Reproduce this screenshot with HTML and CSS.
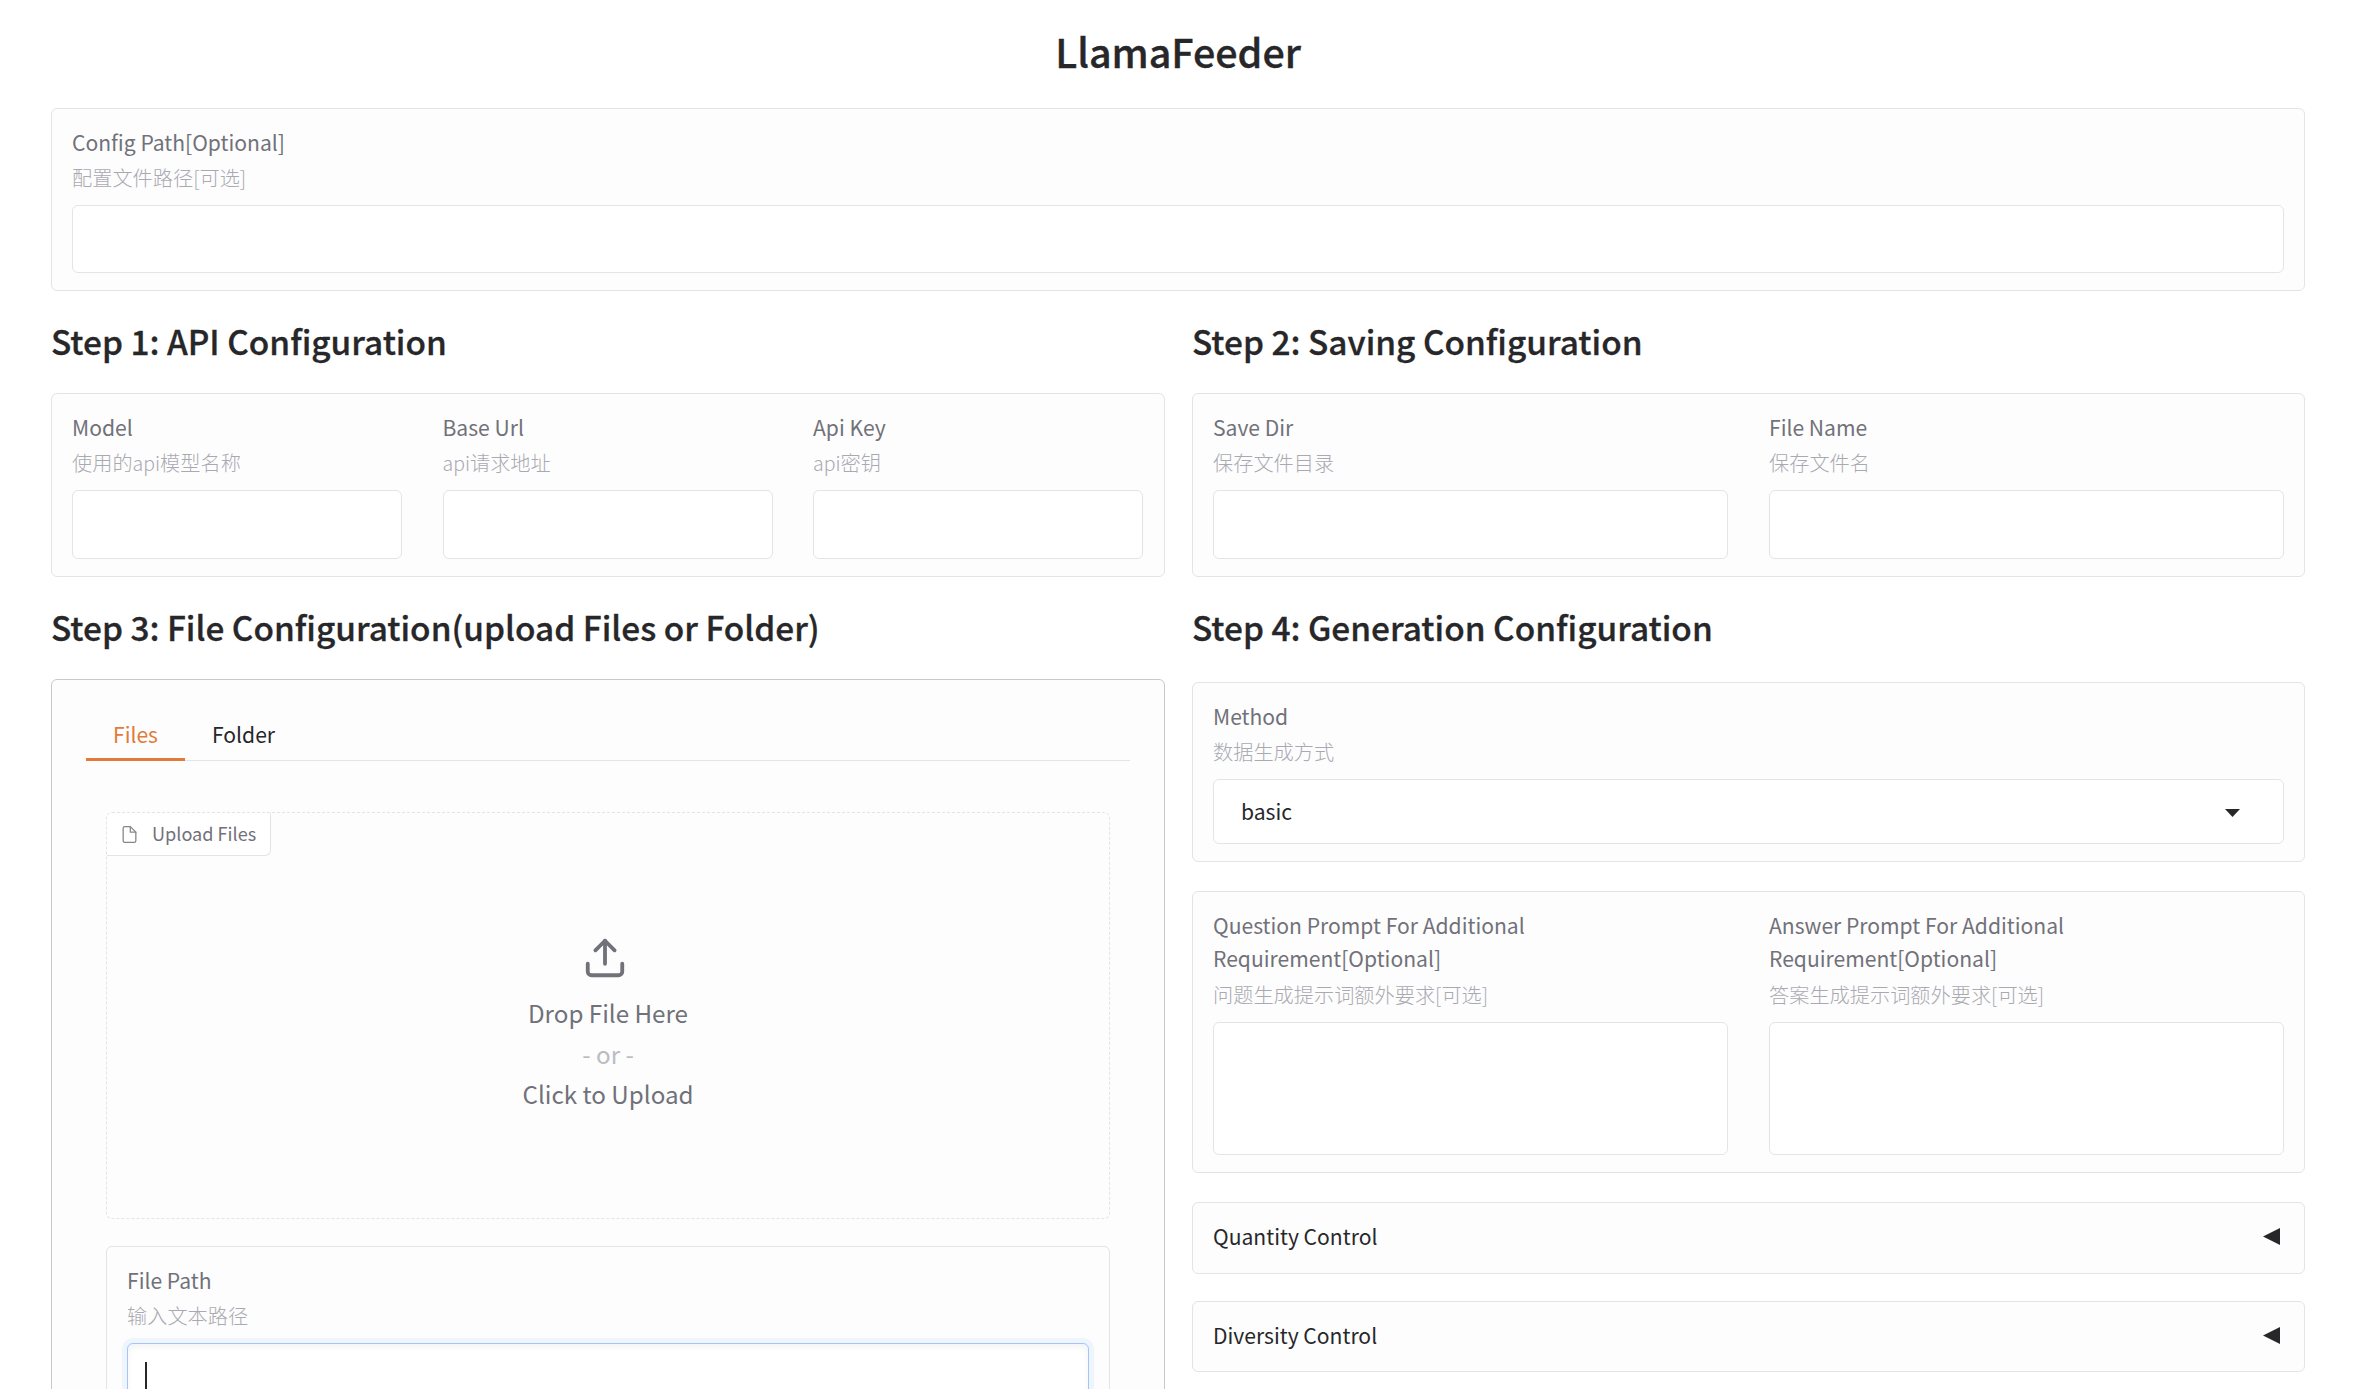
FILE: index.html
```html
<!DOCTYPE html>
<html lang="en">
<head>
<meta charset="utf-8">
<title>LlamaFeeder</title>
<link rel="stylesheet" href="styles.css">
</head>
<body>
<main class="app">
  <h1 class="title"><span>LlamaFeeder</span></h1>

  <section class="card">
    <div class="field">
      <span class="label">Config Path[Optional]</span>
      <span class="info">配置文件路径[可选]</span>
      <div class="input"></div>
    </div>
  </section>

  <div class="columns">
    <section class="column">
      <h2 class="heading"><span>Step 1: API Configuration</span></h2>
      <div class="card card-row card-tall card-thirds">
        <div class="field">
          <span class="label">Model</span>
          <span class="info">使用的<span class="latin">api</span>模型名称</span>
          <div class="input"></div>
        </div>
        <div class="field">
          <span class="label">Base Url</span>
          <span class="info"><span class="latin">api</span>请求地址</span>
          <div class="input"></div>
        </div>
        <div class="field">
          <span class="label">Api Key</span>
          <span class="info"><span class="latin">api</span>密钥</span>
          <div class="input"></div>
        </div>
      </div>
    </section>
    <section class="column">
      <h2 class="heading"><span>Step 2: Saving Configuration</span></h2>
      <div class="card card-row card-tall">
        <div class="field">
          <span class="label">Save Dir</span>
          <span class="info">保存文件目录</span>
          <div class="input"></div>
        </div>
        <div class="field">
          <span class="label">File Name</span>
          <span class="info">保存文件名</span>
          <div class="input"></div>
        </div>
      </div>
    </section>
  </div>

  <div class="columns">
    <section class="column">
      <h2 class="heading"><span>Step 3: File Configuration(upload Files or Folder)</span></h2>
      <div class="panel">
        <nav class="tabs">
          <span class="tab tab-active">Files</span>
          <span class="tab">Folder</span>
        </nav>
        <div class="panel-body">
          <div class="dropzone">
            <div class="drop-tag">
              <svg class="file-icon" viewBox="0 0 24 24" fill="none" stroke="currentColor" stroke-width="1.6" stroke-linecap="round" stroke-linejoin="round"><path d="M13 2H6a2 2 0 0 0-2 2v16a2 2 0 0 0 2 2h12a2 2 0 0 0 2-2V9z"/><path d="M13 2v7h7"/></svg>
              <span>Upload Files</span>
            </div>
            <svg class="upload-icon" viewBox="0 0 24 24" fill="none" stroke="currentColor" stroke-width="2" stroke-linecap="round" stroke-linejoin="round"><path d="M21 15v4a2 2 0 0 1-2 2H5a2 2 0 0 1-2-2v-4"/><path d="M17 8l-5-5-5 5"/><path d="M12 3v12"/></svg>
            <span class="drop-line">Drop File Here</span>
            <span class="drop-line drop-or">- or -</span>
            <span class="drop-line">Click to Upload</span>
          </div>
          <div class="card card-path">
            <div class="field">
              <span class="label">File Path</span>
              <span class="info">输入文本路径</span>
              <div class="input input-focus"><i class="caret"></i></div>
            </div>
          </div>
        </div>
      </div>
    </section>

    <section class="column">
      <h2 class="heading"><span>Step 4: Generation Configuration</span></h2>
      <div class="card card-method">
        <div class="field">
          <span class="label">Method</span>
          <span class="info">数据生成方式</span>
          <div class="input select">
            <span>basic</span>
            <svg class="select-arrow" viewBox="0 0 15 8"><path d="M0 0h15L7.500 8z"/></svg>
          </div>
        </div>
      </div>
      <div class="card card-row card-prompts">
        <div class="field">
          <span class="label">Question Prompt For Additional<br>Requirement[Optional]</span>
          <span class="info">问题生成提示词额外要求[可选]</span>
          <div class="input input-area"></div>
        </div>
        <div class="field">
          <span class="label">Answer Prompt For Additional<br>Requirement[Optional]</span>
          <span class="info">答案生成提示词额外要求[可选]</span>
          <div class="input input-area"></div>
        </div>
      </div>
      <div class="card accordion">
        <span class="accordion-label">Quantity Control</span>
        <svg class="fold-arrow" viewBox="0 0 17 17"><path d="M0 8.500L17 0v17z"/></svg>
      </div>
      <div class="card accordion accordion-next">
        <span class="accordion-label">Diversity Control</span>
        <svg class="fold-arrow" viewBox="0 0 17 17"><path d="M0 8.500L17 0v17z"/></svg>
      </div>
    </section>
  </div>
</main>
</body>
</html>
```
FILE: styles.css
```css
* { box-sizing: border-box; }

body {
  margin: 0;
  height: 1389px;
  overflow: hidden;
  background: #fff;
  color: #27272a;
  font-family: "Noto Sans CJK SC", "Open Sans", sans-serif;
  font-size: 21.1px;
}

.app { padding: 0 63px 0 51px; }

.title {
  margin: 0;
  height: 108px;
  line-height: 101px;
  font-size: 39.4px;
  font-weight: 500;
  text-align: center;
  -webkit-text-stroke: 0.4px currentColor;
}

.heading {
  margin: 0;
  height: 102px;
  line-height: 100px;
  font-size: 33.4px;
  font-weight: 500;
  white-space: nowrap;
  -webkit-text-stroke: 0.3px currentColor;
}

.columns { display: grid; grid-template-columns: 1114px 1113px; column-gap: 27px; }
.column { min-width: 0; }

.card {
  height: 183px;
  padding: 17px 20px;
  border: 1px solid #e4e4e7;
  border-radius: 6px;
  background: #fdfdfd;
}
.card-row { display: flex; gap: 41px; }
.card-tall { height: 184px; }
.card-thirds { gap: 40.5px; padding-right: 21px; }

.field { display: flex; flex: 1; flex-direction: column; min-width: 0; }
.label { color: #71717a; line-height: 33px; white-space: nowrap; }
.info { height: 46px; color: #a9a9b1; font-size: 20.2px; line-height: 37px; font-weight: 300; white-space: nowrap; }
.latin { font-size: 19.5px; }

.input {
  height: 68px;
  border: 1px solid #e4e4e7;
  border-radius: 6px;
  background: #fff;
}
.card-tall .input { height: 69px; }

.panel {
  height: 760px;
  padding: 33px 34px 0;
  border: 1px solid #c9c9cd;
  border-radius: 6px;
  background: #fdfdfd;
}
.tabs { display: flex; height: 48px; border-bottom: 1px solid #e4e4e7; }
.tab { height: 48px; padding: 0 27px; line-height: 42px; }
.tab-active { width: 99px; border-bottom: 3px solid #e07b39; color: #e07b39; }
.panel-body { padding: 51px 20px 0; }

.dropzone {
  position: relative;
  display: flex;
  flex-direction: column;
  align-items: center;
  height: 407px;
  padding-top: 122px;
  border: 1px dashed #e4e4e7;
  border-radius: 6px;
  color: #71717a;
}
.drop-tag {
  position: absolute;
  top: 0;
  left: 0;
  display: flex;
  align-items: center;
  gap: 13px;
  width: 164px;
  height: 43px;
  padding-left: 13px;
  border-right: 1px solid #e4e4e7;
  border-bottom: 1px solid #e4e4e7;
  border-radius: 5px 0 6px 0;
  background: #fff;
  font-size: 18.1px;
  line-height: 26px;
  white-space: nowrap;
}
.drop-tag span { padding-bottom: 2px; }
.file-icon { width: 19px; height: 19px; color: #85858c; }
.upload-icon { width: 46px; height: 46px; margin: 0 6px 12px 0; }
.drop-line { font-size: 24.2px; line-height: 40.7px; }
.drop-or { color: #bbbbc2; }

.card-path { height: 200px; margin-top: 27px; }
.input-focus {
  padding: 18px 17px;
  border-color: #a4c5f8;
  box-shadow: 0 0 0 5px #eff5fe, inset 0 3px 6px rgba(0, 0, 0, 0.05);
}
.caret { display: block; width: 2px; height: 32px; background: #27272a; }

.card-method { height: 180px; margin-top: 3px; }
.select { display: flex; align-items: center; justify-content: space-between; height: 65px; padding: 0 43px 0 27px; }
.select span { padding-bottom: 2px; }
.select-arrow { width: 15px; height: 8px; margin-top: 3px; fill: #27272a; }
.card-prompts { height: 282px; margin-top: 29px; }
.card-prompts .label { padding-bottom: 1px; }
.input-area { height: 133px; }
.accordion { display: flex; align-items: center; justify-content: space-between; height: 72px; margin-top: 29px; padding: 0 24px 3px 20px; }
.accordion-next { height: 71px; margin-top: 27px; padding-bottom: 2px; }
.accordion-label { padding-bottom: 2px; }
.fold-arrow { width: 17px; height: 17px; fill: #27272a; }
```
